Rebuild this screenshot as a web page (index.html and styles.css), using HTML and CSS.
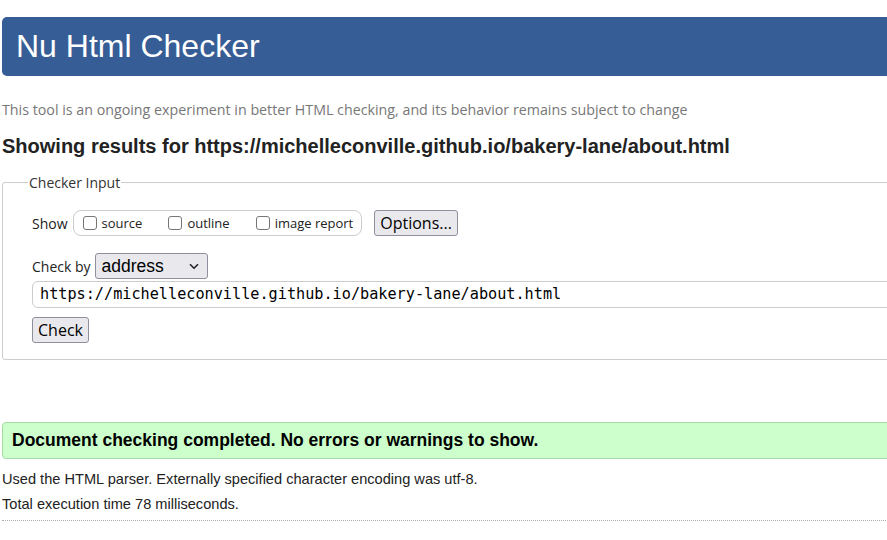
FILE: index.html
```html
<!DOCTYPE html>
<html>
<head>
<meta charset="utf-8">
<title>Nu Html Checker</title>
<link rel="stylesheet" href="styles.css">
</head>
<body>
<div class="page">
  <h1 class="banner">Nu Html Checker</h1>
  <p class="tagline">This tool is an ongoing experiment in better HTML checking, and its behavior remains subject to change</p>
  <h2 class="results-for">Showing results for https://michelleconville.github.io/bakery-lane/about.html</h2>
  <fieldset class="checker">
    <legend>Checker Input</legend>
    <div class="row show-row">
      <span class="lbl">Show</span>
      <span class="pill">
        <label class="opt"><span class="box"></span>source</label>
        <label class="opt"><span class="box"></span>outline</label>
        <label class="opt"><span class="box"></span>image report</label>
      </span>
      <button class="btn options">Options...</button>
    </div>
    <div class="row checkby-row">
      <span class="lbl lbl-tight">Check by</span>
      <span class="select">address
        <svg class="chev" width="10" height="7" viewBox="0 0 10 7"><path d="M1 1.2 L5 5.2 L9 1.2" fill="none" stroke="#222" stroke-width="1.6"/></svg>
      </span>
    </div>
    <div class="url">https://michelleconville.github.io/bakery-lane/about.html</div>
    <div class="row"><button class="btn check">Check</button></div>
  </fieldset>
  <p class="success">Document checking completed. No errors or warnings to show.</p>
  <p class="info first">Used the HTML parser. Externally specified character encoding was utf-8.</p>
  <p class="info">Total execution time 78 milliseconds.</p>
  <hr class="dots">
</div>
</body>
</html>
```
FILE: styles.css
```css
html, body {
  margin: 0;
  padding: 0;
  overflow: hidden;
  background: #fff;
}
.page {
  width: 1000px;
  padding: 17px 0 0 2px;
  font-family: "Liberation Sans", Arial, sans-serif;
  color: #222;
}
.banner {
  margin: 0;
  height: 59px;
  box-sizing: border-box;
  background: #365d95;
  color: #fff;
  border-radius: 5px;
  font-weight: normal;
  font-size: 32px;
  line-height: 59px;
  padding-left: 14px;
}
.tagline {
  margin: 24px 0 0 0;
  font-family: "Open Sans", sans-serif;
  font-size: 14.25px;
  line-height: 20px;
  color: #777;
}
.results-for {
  margin: 10px 0 0 0;
  font-size: 20px;
  line-height: 32px;
  font-weight: bold;
  color: #222;
}
.checker {
  margin: 11px 0 0 0;
  border: 1px solid #ccc;
  border-radius: 3px;
  padding: 16px 0 16px 29px;
  font-family: "Open Sans", sans-serif;
  font-size: 14px;
  color: #222;
}
.checker legend {
  padding: 0 1px;
  margin-left: -4px;
  color: #333;
  font-size: 14px;
}
.row {
  display: flex;
  align-items: center;
}
.lbl { margin-right: 5px; }
.lbl-tight { margin-right: 4px; }
.show-row { height: 30px; }
.pill {
  display: inline-flex;
  align-items: center;
  height: 26px;
  box-sizing: border-box;
  border: 1px solid #ccc;
  border-radius: 8px;
  padding: 0 8px 0 9px;
  gap: 26px;
  font-size: 13px;
}
.opt { display: inline-flex; align-items: center; }
.box {
  width: 14px;
  height: 14px;
  box-sizing: border-box;
  border: 1px solid #767676;
  border-radius: 3px;
  margin-right: 5px;
}
.btn {
  font-family: "Open Sans", sans-serif;
  font-size: 16px;
  background: #e9e9ed;
  border: 1px solid #8f8f9d;
  border-radius: 3px;
  padding: 0 6px;
  height: 26px;
  color: #000;
}
.options { margin-left: 12px; padding: 0 5px; }
.checkby-row { margin-top: 15px; }
.select {
  display: inline-flex;
  align-items: center;
  justify-content: space-between;
  width: 113px;
  height: 26px;
  box-sizing: border-box;
  background: #e9e9ed;
  border: 1px solid #8f8f9d;
  border-radius: 3px;
  padding: 0 8px 0 6px;
  font-size: 17.5px;
  color: #000;
  font-family: "Liberation Sans", Arial, sans-serif;
}
.url {
  margin-top: 2px;
  height: 27px;
  box-sizing: border-box;
  border: 1px solid #ccc;
  border-radius: 6px;
  padding: 0 0 0 7px;
  font-family: "DejaVu Sans Mono", monospace;
  font-size: 15.2px;
  line-height: 25px;
  color: #000;
}
.check { margin-top: 9px; padding: 0 5px; }
.success {
  margin: 62px 0 0 0;
  background: #ccffcc;
  border: 1px solid #a6dba6;
  border-radius: 4px;
  height: 37px;
  box-sizing: border-box;
  padding-left: 9px;
  font-weight: bold;
  font-size: 17.5px;
  line-height: 35px;
  color: #000;
}
.info {
  margin: 0;
  font-size: 14.6px;
  line-height: 25px;
  color: #222;
}
.info.first { margin-top: 8px; }
.dots {
  margin: 3px 0 0 0;
  border: 0;
  border-top: 1px dotted #aaa;
}
```
